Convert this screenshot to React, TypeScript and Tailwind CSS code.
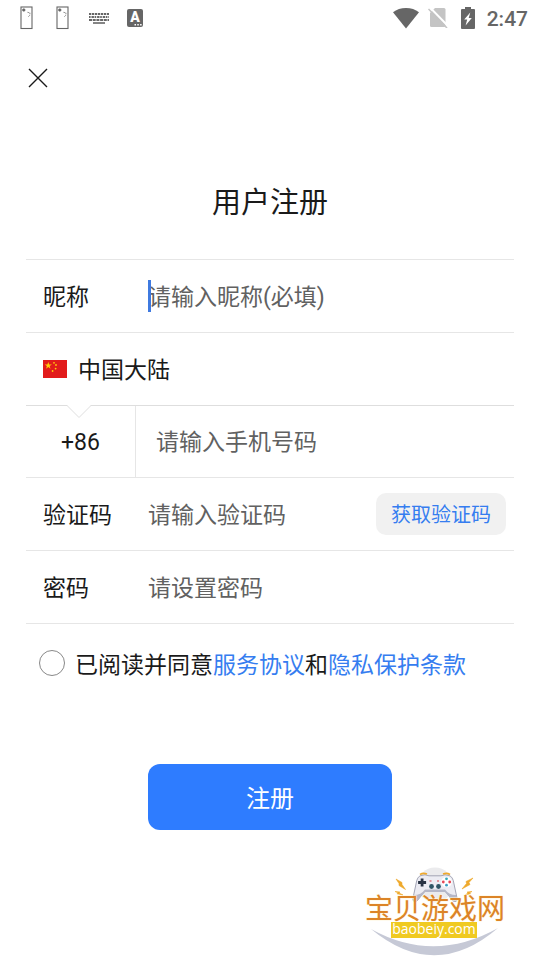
import { useState } from 'react'
import type { ReactNode } from 'react'

const DeviceIcon = () => (
  <svg viewBox="0 0 13 24" className="h-6 w-[13px]" fill="none" stroke="#666">
    <rect x="1" y="1" width="11" height="21.5" strokeWidth="1.1" />
    <circle cx="3.8" cy="4" r="1.3" fill="#666" strokeWidth="0.6" />
    <path d="M7.5 6.3l2.4.5v2.4L8 11" strokeWidth="0.8" strokeDasharray="1.4 0.8" />
  </svg>
)

const KeyboardIcon = () => (
  <svg viewBox="0 0 22 12" className="h-3 w-[22px]" stroke="#666" fill="none">
    <path d="M1 2h20" strokeWidth="1.8" strokeDasharray="2.3 0.7" />
    <path d="M1 5h20" strokeWidth="1.8" strokeDasharray="1.6 0.9 2.4 0.7" />
    <path d="M1 8h20" strokeWidth="1.8" strokeDasharray="3 0.7" />
    <path d="M5 11h12" strokeWidth="1.6" />
  </svg>
)

const InputMethodIcon = () => (
  <span className="relative flex h-[18px] w-4 justify-center rounded-xs bg-[#666] font-[Roboto,sans-serif] text-sm leading-[17px] font-black text-white">
    A
    <svg viewBox="0 0 8 2" className="absolute right-px bottom-px h-0.5 w-2" fill="#fff">
      <path d="M0.5 0h1.500v1.600H0.500zM3.300 0h1.500v1.600H3.300zM6.100 0h1.500v1.600H6.100z" />
    </svg>
  </span>
)

const StatusBar = () => (
  <div className="flex h-9 items-center justify-between pr-3 pl-5">
    <div className="flex items-center">
      <DeviceIcon />
      <span className="ml-[23px] flex">
        <DeviceIcon />
      </span>
      <span className="ml-[19px] flex">
        <KeyboardIcon />
      </span>
      <span className="ml-[17px] flex">
        <InputMethodIcon />
      </span>
    </div>
    <div className="flex items-center text-[#666]">
      <svg viewBox="0 0 26 21" className="h-[21px] w-[26px]" fill="currentColor">
        <path d="M0 4.2C3.5 1.6 8 0 13 0s9.500 1.600 13 4.200L13 20.500z" />
      </svg>
      <svg viewBox="0 0 20 20" className="ml-[9px] size-5">
        <path d="M7 0H16Q17.500 0 17.500 1.500V17.500Q17.500 19 16 19H3.500Q2 19 2 17.500V5z" fill="#c4c4c4" />
        <path d="M2 -0.500L20.500 18.500" stroke="#fff" strokeWidth="2" />
        <path d="M0.500 1L19 20" stroke="#c4c4c4" strokeWidth="1.500" />
      </svg>
      <svg viewBox="0 0 14 22" className="ml-[13px] h-[22px] w-3.5" fill="currentColor">
        <path d="M4 0h6v2h3q1 0 1 1v18q0 1-1 1H1q-1 0-1-1V3q0-1 1-1h3z" />
        <path d="M9.300 5.500L3.200 12.500H6.200L4.600 18.500L10.800 11H7.700z" fill="#fff" />
      </svg>
      <span className="ml-3 pt-0.5 font-[Roboto,sans-serif] text-[21px] leading-6 font-medium">2:47</span>
    </div>
  </div>
)

const ChinaFlag = () => (
  <svg viewBox="0 0 24 18" className="h-[18px] w-6">
    <path d="M0 0h24v18H0z" fill="#e21b1b" />
    <g fill="#ffca0a">
      <path d="M5.300 1.900L6.200 4.500H8.900L6.700 6.100L7.500 8.700L5.300 7.100L3.100 8.700L3.900 6.100L1.700 4.500H4.400z" />
      <circle cx="11" cy="2.800" r="0.900" />
      <circle cx="13" cy="5" r="0.900" />
      <circle cx="12.600" cy="8.600" r="0.900" />
      <circle cx="9.600" cy="11" r="0.900" />
    </g>
  </svg>
)

const SiteLogo = () => (
  <svg viewBox="0 0 144 96" className="h-24 w-36" role="img" aria-label="宝贝游戏网">
    <circle cx="71" cy="21" r="17.500" fill="#ebebed" />
    <path d="M7 65Q70 100 134 64Q71 118 7 65z" fill="#c6c9d6" />
    <g fill="#efa92c" stroke="#efa92c" strokeWidth="0.600">
      <path d="M32 15L38 18.500L38 20.500L41.500 25.500L35 21.500L35 19.500z" />
      <path d="M31 27.500L36 28L35 29L39 31L33 29.800L34 28.800z" />
      <path d="M109 14L102 17.500L102.500 19.500L98 25L106 20.500L105 18.500z" />
      <path d="M108 27.500L103 28L104 29L101 31L106.500 29.800L105.500 28.800z" />
    </g>
    <path
      d="M57 11.500Q61 10 65 11.800H77Q81 10 85 11.500Q89 12.500 90 20L93 34Q93.500 39 89 37L81 27H61L53 37Q48.500 39 49 34L52 20Q53 12.500 57 11.500z"
      fill="#ececf3"
      stroke="#9a9cae"
      strokeWidth="0.900"
    />
    <path d="M50 31Q57 31 61 25.500H81Q85 31 92 31L93 34Q93.500 39 89 37L81 28H61L53 37Q48.500 39 49 34z" fill="#b5b7c7" />
    <path d="M56 10.500Q59 8.500 63 10M79 10Q83 8.500 86 10.500" stroke="#efa92c" strokeWidth="1.600" fill="none" />
    <path d="M56.700 14.500h2.800v2.600h2.600v2.800h-2.600v2.600h-2.800v-2.600h-2.600v-2.800h2.600z" fill="#293344" />
    <circle cx="67.500" cy="22.500" r="2.400" fill="#2f5565" />
    <circle cx="74.500" cy="22.500" r="2.400" fill="#2f5565" />
    <path d="M65.500 17h2M73 17h2" stroke="#d63846" strokeWidth="1.200" />
    <circle cx="82.500" cy="18" r="5.300" fill="#fff" />
    <circle cx="82.500" cy="14.800" r="1.400" fill="#36a7b9" />
    <circle cx="85.700" cy="18" r="1.400" fill="#e64755" />
    <circle cx="82.500" cy="21.200" r="1.400" fill="#3c9fc3" />
    <circle cx="79.300" cy="18" r="1.400" fill="#e64755" />
    <path d="M27 58h86v16H27z" fill="#f0ca21" />
    <text
      x="1"
      y="55"
      fontSize="28"
      fill="#dc8427"
      stroke="#fff8df"
      strokeWidth="1"
      paintOrder="stroke"
      className="font-['Noto_Sans_CJK_SC',sans-serif]"
    >
      宝贝游戏网
    </text>
    <text
      x="70"
      y="70"
      fontSize="14"
      textAnchor="middle"
      fill="#fff"
      fontWeight="500"
      className="font-['Open_Sans',sans-serif]"
    >
      baobeiy.com
    </text>
  </svg>
)

const inputClass =
  'h-full min-w-0 flex-1 bg-transparent pt-0.5 text-[23px] text-[#1a1a1a] outline-none placeholder:text-[#616161]'

const FormRow = ({ id, label, children }: { id: string; label: string; children: ReactNode }) => (
  <div className="flex h-[73px] items-center border-b border-[#e6e6e6] pr-2 pl-[17px]">
    <label htmlFor={id} className="w-[105px] shrink-0 pt-1">
      {label}
    </label>
    {children}
  </div>
)

const App = () => {
  const [agreed, setAgreed] = useState(false)
  const [nickname, setNickname] = useState('')

  return (
    <main className="flex min-h-screen flex-col bg-white font-[Roboto,'Noto_Sans_CJK_SC',sans-serif] text-[23px] leading-8 text-[#1a1a1a]">
      <StatusBar />
      <header className="flex px-5 pt-6">
        <button type="button" aria-label="关闭" className="flex size-9 items-center justify-center">
          <svg viewBox="0 0 20 20" className="size-5" stroke="#1a1a1a" strokeWidth="1.400">
            <path d="M1 1l18 18M19 1L1 19" />
          </svg>
        </button>
      </header>

      <form className="flex flex-col px-[26px] pt-[87px]" onSubmit={(event) => event.preventDefault()}>
        <h1 className="text-center text-[29px] leading-10">用户注册</h1>

        <div className="mt-9 border-t border-[#e6e6e6]">
          <FormRow id="nickname" label="昵称">
            <div className="relative flex h-full flex-1 items-center">
              {nickname === '' ? <span className="absolute left-0 h-8 w-[3px] bg-[#3f7ae0]" /> : null}
              <input
                id="nickname"
                value={nickname}
                onChange={(event) => setNickname(event.target.value)}
                placeholder="请输入昵称(必填)"
                className={inputClass}
              />
            </div>
          </FormRow>

          <button
            type="button"
            className="flex h-[73px] w-full items-center gap-[11px] border-b border-[#dedede] pl-[17px]"
          >
            <ChinaFlag />
            <span className="pt-1">中国大陆</span>
          </button>

          <div className="flex h-[72px] items-center border-b border-[#e6e6e6]">
            <label
              htmlFor="phone"
              className="relative flex h-full w-[110px] shrink-0 items-center justify-center border-r border-[#e6e6e6] pt-0.5"
            >
              <svg viewBox="0 0 26 14" className="absolute -top-px left-10 h-3.5 w-[26px]">
                <path d="M1 0H25L13 12.500z" fill="#fff" />
                <path d="M1 0.500L13 12.500L25 0.500" fill="none" stroke="#dedede" />
              </svg>
              +86
            </label>
            <input id="phone" type="tel" placeholder="请输入手机号码" className={`${inputClass} pl-5`} />
          </div>

          <FormRow id="code" label="验证码">
            <input id="code" placeholder="请输入验证码" className={inputClass} />
            <button
              type="button"
              className="h-[42px] shrink-0 rounded-[10px] bg-[#f1f1f1] px-[15px] pt-0.5 text-xl text-[#357df0]"
            >
              获取验证码
            </button>
          </FormRow>

          <FormRow id="password" label="密码">
            <input id="password" type="password" placeholder="请设置密码" className={inputClass} />
          </FormRow>
        </div>

        <div className="mt-[22px] flex items-center gap-[10px] pl-[13px]">
          <input
            id="agree"
            type="checkbox"
            checked={agreed}
            onChange={(event) => setAgreed(event.target.checked)}
            className="mb-0.5 size-[26px] shrink-0 appearance-none rounded-full border border-[#888] checked:border-8 checked:border-[#2e7cff]"
          />
          <label htmlFor="agree" className="pt-1">
            已阅读并同意
            <a href="#terms" className="text-[#357df0]">
              服务协议
            </a>
            和
            <a href="#privacy" className="text-[#357df0]">
              隐私保护条款
            </a>
          </label>
        </div>

        <button
          type="submit"
          className="mt-[82px] h-[66px] w-1/2 self-center rounded-xl bg-[#2e7cff] pt-1 text-2xl text-white"
        >
          注册
        </button>
      </form>

      <div className="mt-auto flex justify-end pr-8">
        <SiteLogo />
      </div>
    </main>
  )
}

export default App
